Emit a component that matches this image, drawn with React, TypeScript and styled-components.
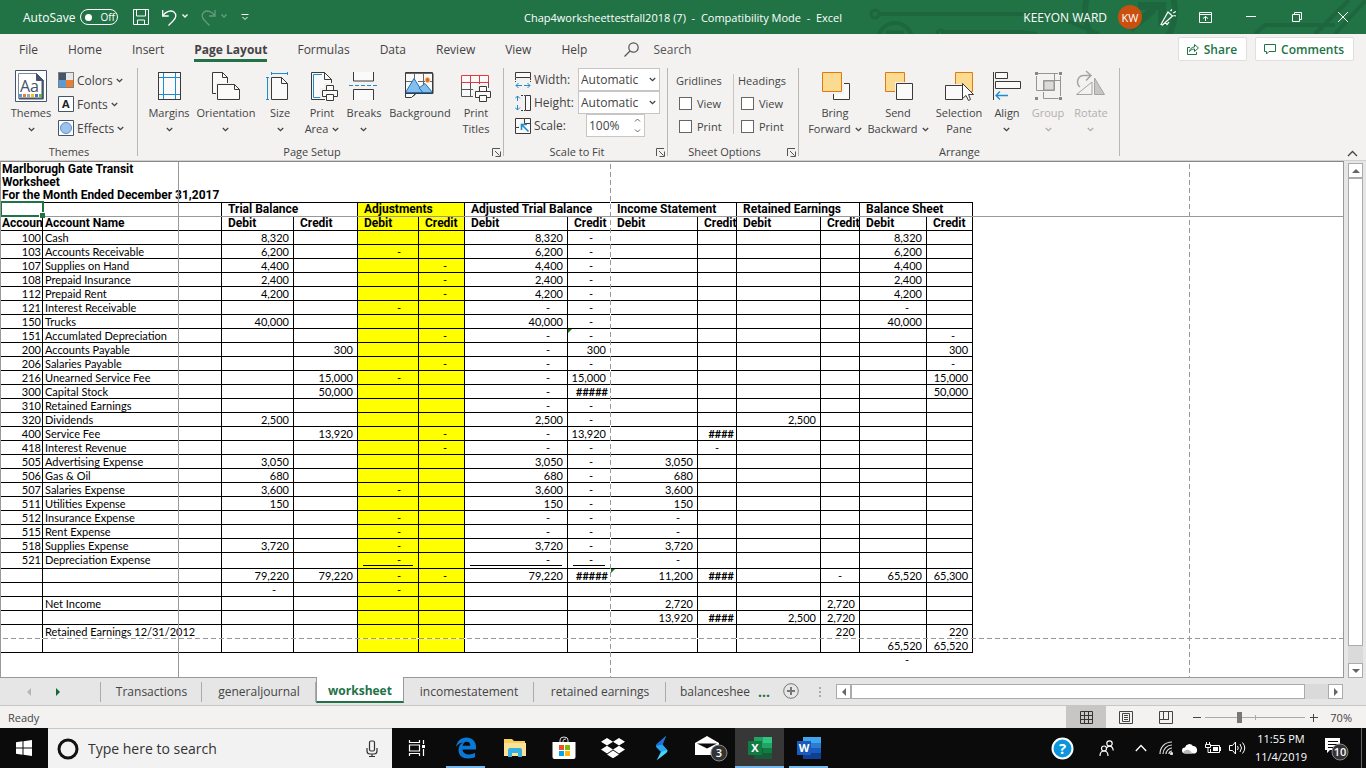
import React from "react";
import styled, { createGlobalStyle, css } from "styled-components";

const GlobalStyle = createGlobalStyle`
  * { box-sizing: border-box; }
  body { margin: 0; background: #e6e6e6; }
  body, button, input, select { font-family: "Open Sans", "Noto Sans", sans-serif; }
  button { border: 0; padding: 0; margin: 0; background: none; color: inherit; font-size: inherit; }
  svg { display: block; flex: none; }
`;

const Screen = styled.div`
  display: flex;
  flex-direction: column;
  height: 100vh;
  overflow: hidden;
  color: #444;
  font-size: 12px;
`;

/* ---------- title bar ---------- */

const TitleBar = styled.header`
  position: relative;
  display: grid;
  grid-template-columns: 1fr auto 1fr;
  align-items: center;
  height: 34px;
  flex: none;
  background: #217346;
  color: #fff;
`;

const TitleArt = styled.svg`
  position: absolute;
  right: 0;
  top: 0;
`;

const QuickAccess = styled.div`
  display: flex;
  align-items: center;
  padding-left: 23px;
`;

const AutoSave = styled.label`
  display: flex;
  align-items: center;
  gap: 5px;
  margin-right: 14px;
`;

const Toggle = styled.button`
  display: flex;
  align-items: center;
  gap: 8px;
  width: 38px;
  height: 16px;
  padding-left: 4px;
  border: 1px solid #fff;
  border-radius: 8px;
  font-size: 10px;
  line-height: 14px;
  &::before {
    content: "";
    width: 7px;
    height: 7px;
    border-radius: 50%;
    background: #fff;
  }
`;

const BarButton = styled.button<{ $w: number; $dim?: boolean; $short?: boolean }>`
  display: flex;
  align-items: center;
  justify-content: center;
  width: ${(p) => p.$w}px;
  height: ${(p) => (p.$short ? 26 : 34)}px;
  opacity: ${(p) => (p.$dim ? 0.3 : 1)};
`;

const DocTitle = styled.h1`
  margin: 0;
  font-size: 11px;
  font-weight: 400;
  white-space: pre;
`;

const WindowTools = styled.div`
  position: relative;
  display: flex;
  align-items: center;
  justify-content: flex-end;
`;

const Avatar = styled.span`
  display: flex;
  align-items: center;
  justify-content: center;
  width: 24px;
  height: 24px;
  margin: 0 12px 0 11px;
  border-radius: 50%;
  background: #ca5010;
  font-size: 11px;
`;

/* ---------- ribbon tabs ---------- */

const TabBar = styled.nav`
  display: flex;
  align-items: center;
  height: 34px;
  flex: none;
  padding: 0 12px 4px 4px;
  background: #f3f2f1;
`;

const RibbonTab = styled.button<{ $active?: boolean }>`
  position: relative;
  height: 30px;
  padding: 0 15px;
  font-size: 12px;
  white-space: nowrap;
  ${(p) =>
    p.$active &&
    css`
      font-weight: 700;
      &::after {
        content: "";
        position: absolute;
        left: 15px;
        right: 15px;
        bottom: 2px;
        height: 3px;
        background: #217346;
      }
    `}
`;

const SearchBox = styled.label`
  display: flex;
  align-items: center;
  gap: 14px;
  margin: 0 auto 0 22px;
`;

const SearchInput = styled.input`
  width: 90px;
  border: 0;
  padding: 0;
  background: none;
  font-size: 12px;
  outline: none;
  &::placeholder { color: #555; opacity: 1; }
`;

const ActionButton = styled.button`
  display: flex;
  align-items: center;
  gap: 5px;
  height: 24px;
  margin-left: 8px;
  padding: 0 9px 0 8px;
  border: 1px solid #e1dfdd;
  border-radius: 2px;
  background: #fff;
  color: #217346;
  font-size: 12px;
  font-weight: 600;
`;

/* ---------- ribbon ---------- */

const Ribbon = styled.section`
  display: flex;
  height: 93px;
  flex: none;
  background: #f3f2f1;
  border-bottom: 1px solid #d2d0ce;
`;

const Group = styled.div<{ $w: number }>`
  position: relative;
  display: flex;
  flex-direction: column;
  width: ${(p) => p.$w}px;
  flex: none;
  &::after {
    content: "";
    position: absolute;
    right: 0;
    top: 0;
    width: 1px;
    height: 88px;
    background: #b9b7b5;
  }
`;

const GroupBody = styled.div<{ $pad?: number }>`
  display: flex;
  height: 76px;
  padding-left: ${(p) => p.$pad ?? 0}px;
`;

const GroupFoot = styled.div<{ $launcher?: boolean }>`
  position: relative;
  height: 16px;
  padding-right: ${(p) => (p.$launcher ? 18 : 0)}px;
  line-height: 16px;
  font-size: 11px;
  text-align: center;
`;

const Launcher = styled.button`
  position: absolute;
  right: 3px;
  top: 4px;
`;

const BigButton = styled.button<{ $w: number; $dim?: boolean }>`
  display: flex;
  flex-direction: column;
  align-items: center;
  width: ${(p) => p.$w}px;
  padding-top: 2px;
  font-size: 11px;
  line-height: 16px;
  white-space: nowrap;
  color: ${(p) => (p.$dim ? "#b1afad" : "#444")};
`;

const BigLabel = styled.span`
  display: flex;
  flex-direction: column;
  align-items: center;
  margin-top: 3px;
`;

const LabelLine = styled.span`
  display: flex;
  align-items: center;
  justify-content: center;
  gap: 4px;
  height: 16px;
`;

const SmallList = styled.div`
  display: flex;
  flex-direction: column;
`;

const SmallButton = styled.button`
  display: flex;
  align-items: center;
  gap: 3px;
  height: 24px;
  font-size: 12px;
`;

const ScaleList = styled.div`
  display: grid;
  grid-template-columns: 19px 44px 82px;
  grid-auto-rows: 23px;
  align-items: center;
`;

const FieldLabel = styled.label`
  font-size: 12px;
  white-space: nowrap;
`;

const Field = styled.span<{ $inset?: boolean }>`
  display: flex;
  align-items: center;
  width: ${(p) => (p.$inset ? 59 : 82)}px;
  height: 23px;
  margin-left: ${(p) => (p.$inset ? 8 : 0)}px;
  padding: 0 3px 0 2px;
  border: 1px solid #c8c6c4;
  background: #fff;
`;

const Select = styled.select`
  flex: 1;
  min-width: 0;
  border: 0;
  padding: 0;
  appearance: none;
  background: none;
  color: #444;
  font-size: 12px;
`;

const Spin = styled.input`
  flex: 1;
  min-width: 0;
  border: 0;
  padding: 0;
  background: none;
  color: #444;
  font-size: 12px;
`;

const OptionColumn = styled.fieldset<{ $rule?: boolean }>`
  display: flex;
  flex-direction: column;
  width: ${(p) => (p.$rule ? 62 : 64)}px;
  height: 60px;
  margin: 6px 0 0;
  padding: 0 0 0 4px;
  border: 0;
  border-right: ${(p) => (p.$rule ? "1px solid #c8c6c4" : "0")};
`;

const OptionTitle = styled.span`
  flex: none;
  height: 18px;
  line-height: 14px;
  font-size: 11px;
`;

const Check = styled.label`
  display: flex;
  align-items: center;
  flex: none;
  gap: 5px;
  height: 23px;
  padding-left: 3px;
  font-size: 11px;
`;

const CheckInput = styled.input`
  width: 13px;
  height: 13px;
  margin: 0;
  appearance: none;
  border: 1px solid #666;
  background: #fff;
`;

const CollapseButton = styled.button`
  margin: auto 8px 3px auto;
`;

/* ---------- worksheet ---------- */

const Workspace = styled.main`
  display: flex;
  flex: 1;
  min-height: 0;
  background: #e6e6e6;
`;

const Pane = styled.div`
  position: relative;
  flex: 1;
  min-width: 0;
  overflow: hidden;
  border: 1px solid #999;
  border-top-color: #8a8886;
  background: #fff;
`;

const Sheet = styled.table`
  width: 972px;
  table-layout: fixed;
  border-collapse: separate;
  border-spacing: 0;
  color: #000;
  font-family: Lato, "Liberation Sans", Arial, sans-serif;
  font-size: 11px;
`;

const Column = styled.col<{ $w: number }>`
  width: ${(p) => p.$w}px;
`;

type CellKind = "id" | "text" | "head" | "headId" | "headText" | "num" | "dash" | "hash" | "lined";

const headFont = css`
  font-family: Roboto, "Liberation Sans", Arial, sans-serif;
  font-size: 12px;
  font-weight: 700;
  text-align: left;
`;

const kindStyles = {
  id: css`text-align: right; padding-right: 1px;`,
  text: css`padding-left: 2px; overflow: visible;`,
  head: css`${headFont} padding-left: 6px;`,
  headId: css`${headFont} padding-left: 1px;`,
  headText: css`${headFont} padding-left: 2px;`,
  num: css`text-align: right; padding-right: 4px;`,
  dash: css`text-align: right; padding-right: 17px;`,
  hash: css`text-align: right; padding-right: 2px; font-weight: 700;`,
  lined: css`text-align: right;`,
};

const Cell = styled.td<{
  $kind: CellKind;
  $fill?: boolean;
  $right?: boolean;
  $bottom?: boolean;
  $flag?: boolean;
  $tall?: boolean;
}>`
  position: relative;
  height: ${(p) => (p.$tall ? 16 : 14)}px;
  padding: 0;
  overflow: hidden;
  vertical-align: top;
  white-space: nowrap;
  line-height: 13px;
  background: ${(p) => (p.$fill ? "#ffff00" : "transparent")};
  border-right: ${(p) => (p.$right ? "1px solid #000" : "1px solid transparent")};
  border-bottom: ${(p) => (p.$bottom ? "1px solid #000" : "0")};
  background-clip: padding-box;
  ${(p) => kindStyles[p.$kind]}
  ${(p) =>
    p.$flag &&
    css`
      &::before {
        content: "";
        position: absolute;
        left: 0;
        top: 0;
        border-top: 4px solid #107c10;
        border-right: 4px solid transparent;
      }
    `}
`;

const TitleCell = styled.td<{ $first?: boolean; $last?: boolean }>`
  height: ${(p) => (p.$first ? 13 : 14)}px;
  padding: 0 0 0 1px;
  ${headFont}
  line-height: ${(p) => (p.$first ? 12 : 13)}px;
  border-bottom: ${(p) => (p.$last ? "1px solid #000" : "0")};
`;

const Underlined = styled.span`
  display: block;
  height: 13px;
  margin: 0 5px;
  padding-right: 12px;
  border-bottom: 1px solid #000;
`;

const FreezeRow = styled.i`
  position: absolute;
  left: 0;
  right: 0;
  top: 54px;
  height: 1px;
  background: #999;
`;

const FreezeColumn = styled.i`
  position: absolute;
  left: 177px;
  top: 0;
  bottom: 0;
  width: 1px;
  background: #999;
`;

const PageBreakColumn = styled.i<{ $x: number }>`
  position: absolute;
  left: ${(p) => p.$x}px;
  top: 0;
  bottom: 0;
  width: 1px;
  background: repeating-linear-gradient(to bottom, #fff 0 2px, #999 2px 7px, #fff 7px 8px);
`;

const PageBreakRow = styled.i`
  position: absolute;
  left: 0;
  right: 0;
  top: 476px;
  height: 1px;
  background: repeating-linear-gradient(to right, #fff 0 2px, #999 2px 7px, #fff 7px 8px);
`;

const Selection = styled.i`
  position: absolute;
  left: 0;
  top: 39px;
  width: 43px;
  height: 16px;
  border: 2px solid #217346;
  border-left-width: 1px;
  &::after {
    content: "";
    position: absolute;
    right: -3px;
    bottom: -3px;
    width: 5px;
    height: 5px;
    background: #217346;
    border: 1px solid #fff;
    border-right: 0;
    border-bottom: 0;
  }
`;

const VScroll = styled.div`
  display: flex;
  flex-direction: column;
  width: 22px;
  flex: none;
  padding: 2px 3px 0 4px;
`;

const VTrack = styled.div`
  flex: 1;
  display: flex;
  background: #dadada;
  padding-bottom: 17px;
`;

const Thumb = styled.div`
  flex: 1;
  border: 1px solid #ababab;
  background: #fff;
`;

const ScrollButton = styled.button`
  display: flex;
  align-items: center;
  justify-content: center;
  width: 15px;
  height: 15px;
  flex: none;
  border: 1px solid #ababab;
  background: #fff;
`;

/* ---------- sheet tabs ---------- */

const SheetBar = styled.nav`
  display: flex;
  height: 28px;
  flex: none;
  background: #e6e6e6;
  border-bottom: 1px solid #c6c6c6;
`;

const SheetNav = styled.div`
  display: flex;
  align-items: center;
  gap: 21px;
  width: 101px;
  flex: none;
  padding-left: 25px;
`;

const SheetTab = styled.button<{ $w: number; $active?: boolean; $cut?: boolean }>`
  position: relative;
  width: ${(p) => p.$w}px;
  height: 27px;
  flex: none;
  overflow: hidden;
  white-space: nowrap;
  font-size: 12px;
  text-align: ${(p) => (p.$cut ? "right" : "center")};
  &::after {
    content: "";
    position: absolute;
    right: 0;
    top: 4px;
    width: ${(p) => (p.$cut ? 0 : 1)}px;
    height: 20px;
    background: #ababab;
  }
  ${(p) =>
    p.$active &&
    css`
      height: 26px;
      margin-top: -1px;
      padding-top: 3px;
      background: #fff;
      color: #217346;
      font-weight: 700;
      border-left: 1px solid #999;
      border-right: 1px solid #999;
      border-bottom: 2px solid #217346;
      &::after { display: none; }
    `}
`;

const NavMark = styled.span`
  display: flex;
  align-items: center;
  width: 8px;
  border-right: 0;
`;

const NavRule = styled.i`
  width: 1px;
  height: 20px;
  margin-left: auto;
  background: #ababab;
`;

const More = styled.button`
  width: 28px;
  color: #217346;
  font-size: 14px;
  font-weight: 700;
`;

const HScroll = styled.div`
  display: flex;
  align-items: center;
  width: 507px;
  margin: 0 23px 0 auto;
`;

const Grip = styled.i`
  width: 2px;
  height: 10px;
  margin: 9px 0 0 15px;
  background: repeating-linear-gradient(#aaa 0 2px, transparent 2px 4px);
`;

const HTrack = styled.div`
  flex: 1;
  display: flex;
  height: 15px;
  padding-right: 23px;
  background: #dadada;
`;

/* ---------- status bar ---------- */

const StatusBar = styled.footer`
  display: flex;
  align-items: center;
  height: 22px;
  flex: none;
  padding: 0 14px 0 8px;
  background: #f3f2f1;
  font-size: 11px;
`;

const StatusText = styled.span`
  margin-right: auto;
`;

const ViewButton = styled.button<{ $active?: boolean }>`
  display: flex;
  align-items: center;
  justify-content: center;
  width: 40px;
  height: 22px;
  background: ${(p) => (p.$active ? "#c8c6c4" : "transparent")};
`;

const Zoom = styled.div`
  display: flex;
  align-items: center;
  gap: 4px;
  margin-left: 6px;
`;

const ZoomSlider = styled.input`
  width: 100px;
  height: 12px;
  margin: 0;
  appearance: none;
  background: linear-gradient(#aaa, #aaa) center / 1px 5px no-repeat,
    linear-gradient(#aaa, #aaa) center / 100% 1px no-repeat;
  &::-webkit-slider-thumb {
    appearance: none;
    width: 5px;
    height: 11px;
    background: #777;
  }
`;

const ZoomValue = styled.span`
  width: 30px;
  text-align: right;
`;

/* ---------- taskbar ---------- */

const Taskbar = styled.nav`
  display: flex;
  height: 40px;
  flex: none;
  background: #0b0b0b;
  color: #fff;
`;

const StartButton = styled.button`
  display: flex;
  align-items: center;
  justify-content: center;
  width: 48px;
`;

const TaskSearch = styled.label`
  display: flex;
  align-items: center;
  width: 344px;
  padding: 0 13px 0 9px;
  border-top: 1px solid #c8c8c8;
  background: #f2f2f2;
`;

const TaskSearchInput = styled.input`
  flex: 1;
  min-width: 0;
  margin-left: 9px;
  border: 0;
  padding: 0;
  background: none;
  font-size: 14px;
  outline: none;
  &::placeholder { color: #333; opacity: 1; }
`;

const TaskButton = styled.button<{ $open?: boolean; $active?: boolean }>`
  position: relative;
  display: flex;
  align-items: center;
  justify-content: center;
  width: 49px;
  background: ${(p) => (p.$active ? "#373737" : "none")};
  &::after {
    content: "";
    position: absolute;
    left: ${(p) => (p.$active ? 0 : 5)}px;
    right: ${(p) => (p.$active ? 0 : 5)}px;
    bottom: 0;
    height: 2px;
    background: ${(p) => (p.$open ? "#76b9ed" : "transparent")};
  }
`;

const Tray = styled.div`
  display: flex;
  align-items: center;
  margin-left: auto;
`;

const TrayButton = styled.button<{ $w: number }>`
  display: flex;
  align-items: center;
  justify-content: center;
  width: ${(p) => p.$w}px;
  height: 40px;
`;

const Clock = styled.time`
  width: 64px;
  text-align: center;
  font-size: 11px;
  line-height: 18px;
  white-space: nowrap;
`;

const DesktopEdge = styled.button`
  width: 5px;
  height: 40px;
  border-left: 1px solid #666;
`;

/* ---------- icons ---------- */

const Chevron = () => (
  <svg width="7" height="5" viewBox="0 0 7 5" fill="none" stroke="currentColor" strokeWidth="1.3">
    <path d="M.8 1 3.5 3.7 6.2 1" />
  </svg>
);

const Arrow = ({ dir, color = "#666" }: { dir: "up" | "down" | "left" | "right"; color?: string }) => {
  const d = {
    up: "M0 6 4 2 8 6Z",
    down: "M0 2 4 6 8 2Z",
    left: "M6 0 2 4 6 8Z",
    right: "M2 0 6 4 2 8Z",
  }[dir];
  return (
    <svg width="8" height="8" viewBox="0 0 8 8">
      <path d={d} fill={color} />
    </svg>
  );
};

const Art = ({ size = 32, children }: { size?: number; children: React.ReactNode }) => (
  <svg width={size} height={size} viewBox={`0 0 ${size} ${size}`} fill="none" stroke="#3b3a39">
    {children}
  </svg>
);

const Printer = ({ x, y }: { x: number; y: number }) => (
  <g transform={`translate(${x} ${y})`} fill="#fafafa">
    <path d="M-1.5 3.5h4v-5h9v5h6v9h-5v4h-9v-4h-5z" stroke="#f3f2f1" fill="#f3f2f1" />
    <path d="M4.500 5.500v-5h7v5" />
    <path d="M.5 5.500h15v6H.5z" />
    <path d="M4.500 9.500h7v6h-7z" />
  </g>
);

const blue = "#1e8bcd";

const icons = {
  themes: (
    <Art>
      <path d="M.5.500h31v31H.5z" fill="#fff" stroke="#44546a" />
      <path d="M3.500 3.500h18l7 7v18h-25z" fill="#fff" stroke="#7a8aa5" />
      <path d="M21.500 3.500v7h7z" fill="#44546a" stroke="#44546a" />
      <path d="M27.500 10v18.500H4" stroke="#44546a" strokeWidth="2" />
      <text x="5" y="22" fontSize="16" fill="#44546a" stroke="none">Aa</text>
      <g stroke="none">
        <path d="M4 24h3v3H4z" fill="#5b9bd5" /><path d="M8 24h3v3H8z" fill="#ed7d31" />
        <path d="M12 24h3v3h-3z" fill="#a5a5a5" /><path d="M16 24h3v3h-3z" fill="#ffc000" />
        <path d="M20 24h3v3h-3z" fill="#4472c4" /><path d="M24 24h3v3h-3z" fill="#70ad47" />
      </g>
    </Art>
  ),
  colors: (
    <Art size={16}>
      <g stroke="none">
        <path d="M0 0h16v16H0z" fill="#7f7f7f" />
        <path d="M1 1h7v7H1z" fill="#44546a" /><path d="M8 1h7v7H8z" fill="#e7e6e6" />
        <path d="M1 8h7v7H1z" fill="#5b9bd5" /><path d="M8 8h7v7H8z" fill="#ed7d31" />
      </g>
    </Art>
  ),
  fonts: (
    <Art size={16}>
      <path d="M.5.500h15v15H.5z" fill="#fff" stroke="#44546a" />
      <text x="4" y="12" fontSize="11" fontWeight="700" fill="#222" stroke="none">A</text>
    </Art>
  ),
  effects: (
    <Art size={16}>
      <path d="M.5.500h15v15H.5z" fill="#fff" stroke="#44546a" />
      <circle cx="8" cy="8" r="5.500" fill="#9dc3ea" stroke="#5b8fd0" />
    </Art>
  ),
  margins: (
    <Art>
      <path d="M5.500 2.500h22v27h-22z" fill="#fafafa" />
      <path d="M10.500 3v26M22.500 3v26M6 7.500h21M6 24.500h21" stroke={blue} />
      <path d="M5.500 2.500h22v27h-22z" />
    </Art>
  ),
  orientation: (
    <Art>
      <path d="M2.500 2.500h10l5 5v16h-15z" fill="#fafafa" /><path d="M12.500 2.500v5h5" />
      <path d="M6 13h20v18H6z" fill="#f3f2f1" stroke="none" />
      <path d="M7.500 14.500h17l5 5v10h-22z" fill="#fafafa" /><path d="M24.500 14.500v5h5" />
    </Art>
  ),
  size: (
    <Art>
      <path d="M7.500 7.500h10l6 6v16h-16z" fill="#fafafa" /><path d="M17.500 7.500v6h6" />
      <path d="M7 3.500h17M7.500 2v3M23.500 2v3M3.500 7v23M2 7.500h3M2 29.500h3" stroke={blue} />
    </Art>
  ),
  printArea: (
    <Art>
      <path d="M5.500 2.500h13l7 7v20h-20z" fill="#fafafa" /><path d="M18.500 2.500v7h7" />
      <path d="M16 4.500H7.500v23H15" stroke={blue} />
      <Printer x={16} y={15} />
    </Art>
  ),
  breaks: (
    <Art>
      <path d="M5.500 2v9h20V2M5.500 30V19.500h20V30" fill="#fafafa" />
      <path d="M1 15.500h30" stroke={blue} strokeDasharray="4 2" />
    </Art>
  ),
  background: (
    <Art>
      <path d="M2 3.500h27v20H12l-3 3H1.500" fill="#fafafa" />
      <path d="M1.500 3.500h27v20h-27zM10.500 4v6M19.500 4v12M2 11.500h6M14 11.500h14" stroke="#666" />
      <circle cx="23.500" cy="10" r="2.500" fill="#e36c0a" stroke="#f8c9a0" />
      <path d="M1.500 22.500 10 8.500l9 14z" fill="#83beec" stroke="#1e6fb8" />
      <path d="M15 18l6-4.500 7.500 9H19z" fill="#83beec" stroke="#1e6fb8" />
      <path d="M1.500 23.500v4h6l4-4z" fill="#fafafa" /><path d="M1.500 2.500h27v21h-27z" />
    </Art>
  ),
  printTitles: (
    <Art>
      <path d="M1.500 5.500h27v21h-27z" fill="#fafafa" stroke="none" />
      <path d="M1.500 12v14.500H14M1.500 19.500H17M10.500 12v14M19.500 12v6M28.500 12v6" stroke="#555" />
      <path d="M1.500 5.500h27v7h-27zM10.500 6v6M19.500 6v6" stroke="#e8373e" />
      <Printer x={15} y={16} />
    </Art>
  ),
  fitWidth: (
    <Art size={16}>
      <path d="M.5.500h15v5H.5z" fill="#fafafa" /><path d="M.5 6v4M15.500 6v4" strokeDasharray="2 1" />
      <path d="M1 13.500h6M9 13.500h6M3.500 11 1 13.500 3.500 16M12.500 11l2.500 2.500-2.500 2.500" stroke={blue} />
    </Art>
  ),
  fitHeight: (
    <Art size={16}>
      <path d="M10.500.500h5v15h-5z" fill="#fafafa" /><path d="M6 .5h4M6 15.500h4" strokeDasharray="2 1" />
      <path d="M2.500 1v5M2.500 10v5M0 3.500 2.500 1 5 3.500M0 12.500 2.500 15 5 12.500" stroke={blue} />
    </Art>
  ),
  scale: (
    <Art size={16}>
      <path d="M9.500 5.500h6M9.500 5.500V.5H.5v9H4M9.500.500h6v15H.5v-6" fill="#fafafa" />
      <path d="M13.500 13.500 7 7M6.500 12V6.500H12" stroke={blue} strokeWidth="1.600" />
    </Art>
  ),
  bringForward: (
    <Art>
      <path d="M14.500 13.500h16v16h-16z" fill="#fafafa" />
      <path d="M2 1h23v23H2z" fill="#f3f2f1" stroke="none" />
      <path d="M3.500 2.500h19v19h-19z" fill="#fadb8f" stroke="#e07a10" />
    </Art>
  ),
  sendBackward: (
    <Art>
      <path d="M3.500 2.500h19v19h-19z" fill="#fadb8f" stroke="#e07a10" />
      <path d="M13 12h19v19H13z" fill="#f3f2f1" stroke="none" />
      <path d="M14.500 13.500h16v16h-16z" fill="#fafafa" />
    </Art>
  ),
  selectionPane: (
    <Art>
      <path d="M12.500 2.500h17v19h-17z" fill="#fadb8f" stroke="#e07a10" />
      <path d="M1 14h20v18H1z" fill="#f3f2f1" stroke="none" />
      <path d="M2.500 15.500h17v14h-17z" fill="#fafafa" />
      <path d="M19.500 13.500v15l3.500-3 2.500 5 2-1-2-5h5z" fill="#fff" />
    </Art>
  ),
  align: (
    <Art>
      <path d="M2.500 2v28" /><path d="M4.500 2.500h12v6h-12zM4.500 11.500h25v7h-25z" fill="#fafafa" />
      <path d="M5 25.500h12M9 21.500l-4 4 4 4" stroke={blue} strokeWidth="1.300" />
    </Art>
  ),
  group: (
    <Art>
      <g stroke="#979593">
        <path d="M4.500 6v14.500h18V4M6 3.500h20M28.500 6v20M11.500 22v6.500h15M11.500 20V10.500h17" />
        <path d="M12 11h10v9H12z" fill="#dcdad8" />
      </g>
      <path d="M3 2h3v3H3zM27 2h3v3h-3zM3 27h3v3H3zM27 27h3v3h-3z" fill="#8a8886" stroke="none" />
    </Art>
  ),
  rotate: (
    <Art>
      <g stroke="#a6a4a2">
        <path d="M1.500 24.500 17 12v12.500z" fill="#f3f2f1" /><path d="M19.500 8v16.500h10z" fill="#c8c6c4" />
        <path d="M5 17A6.500 6.500 0 0 1 8 5.500h8M11 1l5 4.500-5 5" strokeWidth="1.500" />
      </g>
    </Art>
  ),
};

const LauncherIcon = () => (
  <svg width="9" height="9" viewBox="0 0 9 9" fill="none" stroke="#555">
    <path d="M.5 8V.5H8M3 3l4.500 4.500M8.500 3.500v5h-5" />
  </svg>
);

/* ---------- data ---------- */

const columnWidths = [42, 136, 43, 72, 64, 61, 46, 103, 43, 87, 39, 84, 39, 67, 46];
const columns = "ABCDEFGHIJKLMNO".split("");

type Row = Record<string, string>;

const rows: Row[] = [
  { A: "100", B: "Cash", D: "8,320", H: "8,320", I: "-", N: "8,320" },
  { A: "103", B: "Accounts Receivable", D: "6,200", F: "-", H: "6,200", I: "-", N: "6,200" },
  { A: "107", B: "Supplies on Hand", D: "4,400", G: "-", H: "4,400", I: "-", N: "4,400" },
  { A: "108", B: "Prepaid Insurance", D: "2,400", G: "-", H: "2,400", I: "-", N: "2,400" },
  { A: "112", B: "Prepaid Rent", D: "4,200", G: "-", H: "4,200", I: "-", N: "4,200" },
  { A: "121", B: "Interest Receivable", F: "-", H: "-", I: "-", N: "-" },
  { A: "150", B: "Trucks", D: "40,000", H: "40,000", I: "-", N: "40,000" },
  { A: "151", B: "Accumlated Depreciation", G: "-", H: "-", I: "-", O: "-", flag: "I" },
  { A: "200", B: "Accounts Payable", E: "300", H: "-", I: "300", O: "300" },
  { A: "206", B: "Salaries Payable", G: "-", H: "-", I: "-", O: "-" },
  { A: "216", B: "Unearned Service Fee", E: "15,000", F: "-", H: "-", I: "15,000", O: "15,000" },
  { A: "300", B: "Capital Stock", E: "50,000", H: "-", I: "#####", O: "50,000" },
  { A: "310", B: "Retained Earnings", H: "-", I: "-" },
  { A: "320", B: "Dividends", D: "2,500", H: "2,500", I: "-", L: "2,500" },
  { A: "400", B: "Service Fee", E: "13,920", G: "-", H: "-", I: "13,920", K: "####" },
  { A: "418", B: "Interest Revenue", G: "-", H: "-", I: "-", K: "-" },
  { A: "505", B: "Advertising Expense", D: "3,050", H: "3,050", I: "-", J: "3,050" },
  { A: "506", B: "Gas & Oil", D: "680", H: "680", I: "-", J: "680" },
  { A: "507", B: "Salaries Expense", D: "3,600", F: "-", H: "3,600", I: "-", J: "3,600" },
  { A: "511", B: "Utilities Expense", D: "150", H: "150", I: "-", J: "150" },
  { A: "512", B: "Insurance Expense", F: "-", H: "-", I: "-", J: "-" },
  { A: "515", B: "Rent Expense", F: "-", H: "-", I: "-", J: "-" },
  { A: "518", B: "Supplies Expense", D: "3,720", F: "-", H: "3,720", I: "-", J: "3,720" },
  { A: "521", B: "Depreciation Expense", F: "-", H: "-", I: "-", J: "-", underline: "FHI" },
  { D: "79,220", E: "79,220", F: "-", G: "-", H: "79,220", I: "#####", J: "11,200", K: "####", M: "-", N: "65,520", O: "65,300", flag: "J" },
  { D: "-", F: "-" },
  { B: "Net Income", J: "2,720", M: "2,720" },
  { J: "13,920", K: "####", L: "2,500", M: "2,720" },
  { B: "Retained Earnings 12/31/2012", M: "220", O: "220" },
  { N: "65,520", O: "65,520" },
  { N: "-", open: "yes" },
];

const sections = ["Trial Balance", "Adjustments", "Adjusted Trial Balance", "Income Statement", "Retained Earnings", "Balance Sheet"];

const headKinds: CellKind[] = ["headId", "headText"];

const headLabel = (i: number) => ["Account", "Account Name", ""][i] ?? (i % 2 ? "Debit" : "Credit");

const kindOf = (col: string, value: string): CellKind => {
  if (col === "A") return "id";
  if (col === "B") return "text";
  if (value === "-") return "dash";
  return value.startsWith("#") ? "hash" : "num";
};

const isYellow = (col: string) => col === "F" || col === "G";
const noRule = (col: string) => col === "B" || col === "I";

const Worksheet = () => (
  <Sheet>
    <colgroup>
      {columnWidths.map((w, i) => <Column key={i} $w={w} />)}
    </colgroup>
    <tbody>
      <tr><TitleCell colSpan={15} $first>Marlborugh Gate Transit</TitleCell></tr>
      <tr><TitleCell colSpan={15}>Worksheet</TitleCell></tr>
      <tr><TitleCell colSpan={15} $last>For the Month Ended December 31,2017</TitleCell></tr>
      <tr>
        <Cell $kind="head" $bottom />
        <Cell $kind="head" $bottom />
        <Cell $kind="head" $bottom $right />
        {sections.map((s) => (
          <Cell key={s} as="th" colSpan={2} $kind="head" $bottom $right={!s.startsWith("Adjusted")} $fill={s === "Adjustments"}>
            {s}
          </Cell>
        ))}
      </tr>
      <tr>
        {columns.map((c, i) => (
          <Cell key={c} as="th" $kind={headKinds[i] ?? "head"} $bottom $right={!noRule(c)} $fill={isYellow(c)}>
            {headLabel(i)}
          </Cell>
        ))}
      </tr>
      {rows.map((row, r) => (
        <tr key={r}>
          {columns.map((c) => {
            const value = row[c] ?? "";
            const lined = row.underline?.includes(c);
            return (
              <Cell
                key={c}
                $kind={lined ? "lined" : kindOf(c, value)}
                $fill={isYellow(c) && !row.open}
                $right={!noRule(c) && !row.open}
                $bottom={!row.open}
                $flag={row.flag === c}
                $tall={!!row.underline}
              >
                {lined ? <Underlined>{value}</Underlined> : value}
              </Cell>
            );
          })}
        </tr>
      ))}
    </tbody>
  </Sheet>
);

const ribbonTabs = ["File", "Home", "Insert", "Page Layout", "Formulas", "Data", "Review", "View", "Help"];

type Big = { w: number; icon: keyof typeof icons; lines: string[]; menu?: boolean; dim?: boolean };

const Large = ({ w, icon, lines, menu, dim }: Big) => (
  <BigButton $w={w} $dim={dim} disabled={dim}>
    {icons[icon]}
    <BigLabel>
      <LabelLine>{lines[0]}</LabelLine>
      <LabelLine>
        {lines[1]}
        {menu && <Chevron />}
      </LabelLine>
    </BigLabel>
  </BigButton>
);

const Foot = ({ children, launcher }: { children: React.ReactNode; launcher?: boolean }) => (
  <GroupFoot $launcher={launcher}>
    {children}
    {launcher && <Launcher aria-label={`${children} settings`}><LauncherIcon /></Launcher>}
  </GroupFoot>
);

const sheetTabs = [
  { name: "Transactions", w: 101 },
  { name: "generaljournal", w: 114 },
  { name: "worksheet", w: 88, active: true },
  { name: "incomestatement", w: 130 },
  { name: "retained earnings", w: 132 },
];

export default function App() {
  return (
    <Screen>
      <GlobalStyle />
      <TitleBar>
        <TitleArt width="506" height="34" viewBox="0 0 506 34" fill="none" stroke="#1e673e" strokeWidth="4">
          <circle cx="15" cy="14" r="4" strokeWidth="3" />
          <path d="M19 14h172l48 20M81 32h80l16 2" />
          <circle cx="81" cy="34" r="4" strokeWidth="3" />
          <circle cx="35" cy="40" r="17" />
          <path d="M26 33h18" strokeWidth="5" />
          <circle cx="270" cy="11" r="45" strokeWidth="6" />
          <path d="M270 29l24-20M278 6h24v20" strokeWidth="8" />
          <path d="M395 34l10-9h70M455 34l34-34M475 34l31-34" />
        </TitleArt>
        <QuickAccess>
          <AutoSave>
            AutoSave
            <Toggle role="switch" aria-checked="false">Off</Toggle>
          </AutoSave>
          <BarButton $w={18} aria-label="Save">
            <svg width="16" height="16" viewBox="0 0 16 16" fill="none" stroke="#fff">
              <path d="M.5.500h15v15H.5zM3.500 1v6h9V1M4.500 15v-4h7v4" />
            </svg>
          </BarButton>
          <BarButton $w={50} aria-label="Undo">
            <svg width="26" height="17" viewBox="0 0 26 17" fill="none" stroke="#fff" strokeWidth="1.300">
              <path d="M.7 1v6h6M1 6.500C4 2 9 1 12 3c3 2.500 2 6-1 9l-4.500 4.500M20.500 5.500 23 8l2.500-2.500" />
            </svg>
          </BarButton>
          <BarButton $w={28} $dim aria-label="Redo">
            <svg width="26" height="17" viewBox="0 0 26 17" fill="none" stroke="#fff" strokeWidth="1.300">
              <path d="M14 1v6H8M13.700 6.500C11 2 6 1 3 3 0 5.500 1 9 4 12l4.500 4.500M20.500 5.500 23 8l2.500-2.500" />
            </svg>
          </BarButton>
          <BarButton $w={34} aria-label="Customize Quick Access Toolbar">
            <svg width="8" height="7" viewBox="0 0 8 7" fill="none" stroke="#fff">
              <path d="M.5.500h7M1.500 3 4 5.500 6.500 3" />
            </svg>
          </BarButton>
        </QuickAccess>
        <DocTitle>{"Chap4worksheettestfall2018 (7)  -  Compatibility Mode  -  Excel"}</DocTitle>
        <WindowTools>
          KEEYON WARD
          <Avatar>KW</Avatar>
          <BarButton $w={28} aria-label="Coming soon">
            <svg width="17" height="17" viewBox="0 0 17 17" fill="none" stroke="#fff" strokeWidth="1.200">
              <path d="M1 15.500 8 3l4.500 4L2.500 16zM5 13l2 2.500 2-2.500M10.500 2 12 .5M13 4l3-1.500M13.500 6.500 16 7" />
            </svg>
          </BarButton>
          <BarButton $w={46} aria-label="Ribbon Display Options">
            <svg width="13" height="11" viewBox="0 0 13 11" fill="none" stroke="#fff">
              <path d="M.5.500h12v10H.5zM1 2.500h11M6.500 9V4.500M4 6.500l2.500-2 2.500 2" />
            </svg>
          </BarButton>
          <BarButton $w={46} aria-label="Minimize">
            <svg width="10" height="10" viewBox="0 0 10 10" stroke="#fff"><path d="M0 4.500h10" /></svg>
          </BarButton>
          <BarButton $w={46} aria-label="Restore">
            <svg width="10" height="10" viewBox="0 0 10 10" fill="none" stroke="#fff">
              <path d="M.5 2.500h7v7h-7zM2.500 2V.5h7v7H8" />
            </svg>
          </BarButton>
          <BarButton $w={46} aria-label="Close">
            <svg width="10" height="10" viewBox="0 0 10 10" stroke="#fff"><path d="M0 0l10 10M10 0 0 10" /></svg>
          </BarButton>
        </WindowTools>
      </TitleBar>

      <TabBar>
        {ribbonTabs.map((t) => (
          <RibbonTab key={t} $active={t === "Page Layout"}>{t}</RibbonTab>
        ))}
        <SearchBox>
          <svg width="15" height="15" viewBox="0 0 15 15" fill="none" stroke="#555" strokeWidth="1.200">
            <circle cx="9.500" cy="5.500" r="4.700" /><path d="M6 9 .5 14.500" />
          </svg>
          <SearchInput placeholder="Search" aria-label="Search" />
        </SearchBox>
        <ActionButton>
          <svg width="12" height="12" viewBox="0 0 12 12" fill="none" stroke="#217346">
            <path d="M3 4.500H.5v7h9V9M2.500 8.500C3 5.500 5 4 7.500 4V1.500l4 3.500-4 3.500V6C5.500 6 4 6.500 2.500 8.500z" />
          </svg>
          Share
        </ActionButton>
        <ActionButton>
          <svg width="12" height="12" viewBox="0 0 12 12" fill="none" stroke="#217346">
            <path d="M.5 1.500h11v7H5l-2.500 2.500V8.500h-2z" />
          </svg>
          Comments
        </ActionButton>
      </TabBar>

      <Ribbon>
        <Group $w={138}>
          <GroupBody $pad={4}>
            <Large w={54} icon="themes" lines={["Themes"]} menu />
            <SmallList>
              <SmallButton>{icons.colors}Colors<Chevron /></SmallButton>
              <SmallButton>{icons.fonts}Fonts<Chevron /></SmallButton>
              <SmallButton>{icons.effects}Effects<Chevron /></SmallButton>
            </SmallList>
          </GroupBody>
          <Foot>Themes</Foot>
        </Group>
        <Group $w={366}>
          <GroupBody $pad={5}>
            <Large w={52} icon="margins" lines={["Margins"]} menu />
            <Large w={62} icon="orientation" lines={["Orientation"]} menu />
            <Large w={46} icon="size" lines={["Size"]} menu />
            <Large w={38} icon="printArea" lines={["Print", "Area"]} menu />
            <Large w={46} icon="breaks" lines={["Breaks"]} menu />
            <Large w={66} icon="background" lines={["Background"]} />
            <Large w={46} icon="printTitles" lines={["Print", "Titles"]} />
          </GroupBody>
          <Foot launcher>Page Setup</Foot>
        </Group>
        <Group $w={164}>
          <GroupBody $pad={11}>
            <ScaleList>
              {icons.fitWidth}
              <FieldLabel htmlFor="fit-width">Width:</FieldLabel>
              <Field>
                <Select id="fit-width"><option>Automatic</option></Select>
                <Chevron />
              </Field>
              {icons.fitHeight}
              <FieldLabel htmlFor="fit-height">Height:</FieldLabel>
              <Field>
                <Select id="fit-height"><option>Automatic</option></Select>
                <Chevron />
              </Field>
              {icons.scale}
              <FieldLabel htmlFor="scale">Scale:</FieldLabel>
              <Field $inset>
                <Spin id="scale" defaultValue="100%" />
                <svg width="7" height="15" viewBox="0 0 7 15" fill="none" stroke="#666">
                  <path d="M1 3.500 3.500 1 6 3.500M1 11.500 3.500 14 6 11.500" />
                </svg>
              </Field>
            </ScaleList>
          </GroupBody>
          <Foot launcher>Scale to Fit</Foot>
        </Group>
        <Group $w={131}>
          <GroupBody $pad={4}>
            <OptionColumn $rule aria-label="Gridlines">
              <OptionTitle>Gridlines</OptionTitle>
              <Check><CheckInput type="checkbox" />View</Check>
              <Check><CheckInput type="checkbox" />Print</Check>
            </OptionColumn>
            <OptionColumn aria-label="Headings">
              <OptionTitle>Headings</OptionTitle>
              <Check><CheckInput type="checkbox" />View</Check>
              <Check><CheckInput type="checkbox" />Print</Check>
            </OptionColumn>
          </GroupBody>
          <Foot launcher>Sheet Options</Foot>
        </Group>
        <Group $w={321}>
          <GroupBody $pad={5}>
            <Large w={62} icon="bringForward" lines={["Bring", "Forward"]} menu />
            <Large w={64} icon="sendBackward" lines={["Send", "Backward"]} menu />
            <Large w={58} icon="selectionPane" lines={["Selection", "Pane"]} />
            <Large w={38} icon="align" lines={["Align"]} menu />
            <Large w={44} icon="group" lines={["Group"]} menu dim />
            <Large w={42} icon="rotate" lines={["Rotate"]} menu dim />
          </GroupBody>
          <Foot>Arrange</Foot>
        </Group>
        <CollapseButton aria-label="Collapse the Ribbon">
          <svg width="11" height="7" viewBox="0 0 11 7" fill="none" stroke="#444" strokeWidth="1.300">
            <path d="M1 6l4.500-4.500L10 6" />
          </svg>
        </CollapseButton>
      </Ribbon>

      <Workspace>
        <Pane>
          <Worksheet />
          <PageBreakColumn $x={609} />
          <PageBreakColumn $x={1188} />
          <PageBreakRow />
          <FreezeRow />
          <FreezeColumn />
          <Selection />
        </Pane>
        <VScroll>
          <ScrollButton aria-label="Scroll up"><Arrow dir="up" /></ScrollButton>
          <VTrack><Thumb /></VTrack>
          <ScrollButton aria-label="Scroll down"><Arrow dir="down" /></ScrollButton>
        </VScroll>
      </Workspace>

      <SheetBar>
        <SheetNav>
          <NavMark><Arrow dir="left" color="#b5b5b5" /></NavMark>
          <NavMark><Arrow dir="right" color="#0e6b37" /></NavMark>
          <NavRule />
        </SheetNav>
        {sheetTabs.map((t) => (
          <SheetTab key={t.name} $w={t.w} $active={t.active}>{t.name}</SheetTab>
        ))}
        <SheetTab $w={84} $cut>balanceshee</SheetTab>
        <More aria-label="More sheets">...</More>
        <BarButton $w={26} $short aria-label="New sheet">
          <svg width="16" height="16" viewBox="0 0 16 16" fill="none" stroke="#777">
            <circle cx="8" cy="8" r="7.300" /><path d="M8 4v8M4 8h8" strokeWidth="2" />
          </svg>
        </BarButton>
        <Grip />
        <HScroll>
          <ScrollButton aria-label="Scroll left"><Arrow dir="left" /></ScrollButton>
          <HTrack><Thumb /></HTrack>
          <ScrollButton aria-label="Scroll right"><Arrow dir="right" /></ScrollButton>
        </HScroll>
      </SheetBar>

      <StatusBar>
        <StatusText>Ready</StatusText>
        <ViewButton $active aria-label="Normal">
          <svg width="13" height="13" viewBox="0 0 13 13" fill="none" stroke="#333">
            <path d="M.5.500h12v12H.5zM4.500 1v11M8.500 1v11M1 4.500h11M1 8.500h11" />
          </svg>
        </ViewButton>
        <ViewButton aria-label="Page Layout view">
          <svg width="14" height="13" viewBox="0 0 14 13" fill="none" stroke="#444">
            <path d="M.5.500h13v12H.5zM3.500 2.500h7v8h-7zM5 4.500h4M5 6.500h4M5 8.500h4" />
          </svg>
        </ViewButton>
        <ViewButton aria-label="Page Break Preview">
          <svg width="14" height="13" viewBox="0 0 14 13" fill="none" stroke="#444">
            <path d="M.5.500h13v12H.5zM1 8.500h8M9.500 1v8M4.500 1v7" />
          </svg>
        </ViewButton>
        <Zoom>
          <svg width="9" height="9" viewBox="0 0 9 9" stroke="#444"><path d="M1 4.500h8" /></svg>
          <ZoomSlider type="range" min="0" max="100" defaultValue="34" aria-label="Zoom" />
          <svg width="9" height="9" viewBox="0 0 9 9" stroke="#444"><path d="M1 4.500h8M4.500 1v8" /></svg>
          <ZoomValue>70%</ZoomValue>
        </Zoom>
      </StatusBar>

      <Taskbar>
        <StartButton aria-label="Start">
          <svg width="16" height="16" viewBox="0 0 16 16" fill="#fff">
            <path d="M0 2.200 6.500 1.300v6.200H0zM7.500 1.200 16 0v7.500H7.500zM0 8.500h6.500v6.200L0 13.800zM7.500 8.500H16V16l-8.500-1.200z" />
          </svg>
        </StartButton>
        <TaskSearch>
          <svg width="22" height="22" viewBox="0 0 22 22" fill="none">
            <circle cx="11" cy="11" r="9" stroke="#111" strokeWidth="3" />
          </svg>
          <TaskSearchInput placeholder="Type here to search" aria-label="Type here to search" />
          <svg width="14" height="18" viewBox="0 0 14 18" fill="none" stroke="#333" strokeWidth="1.200">
            <rect x="4.500" y="1" width="5" height="10" rx="1.500" />
            <path d="M2 8v3c0 2 1 3 3 3h4c2 0 3-1 3-3V8M7 14v2.500M4 16.500h6" />
          </svg>
        </TaskSearch>
        <TaskButton aria-label="Task View">
          <svg width="18" height="16" viewBox="0 0 18 16" fill="none" stroke="#fff" strokeWidth="1.200">
            <path d="M1.500 0v2.500h10V0M1.500 5h10v6h-10zM1.500 16v-2.500h10V16M15.500 0v4M15.500 9v7" />
            <path d="M14 5h3v3h-3z" fill="#fff" stroke="none" />
          </svg>
        </TaskButton>
        <TaskButton $open aria-label="Edge">
          <svg width="22" height="22" viewBox="0 0 22 22">
            <path d="M1 10C2 4 6 .5 11.500.500 17 .5 21 4.500 21 10v2.500H7.500c.3 3.500 3.200 5 6.500 5 2.200 0 4.200-.6 6-1.700v4.300c-2 1-4.200 1.400-6.700 1.400C7 21.500 3.500 18 3.500 13c0-3.300 1.700-6 4.500-7.500C4.500 6 2.500 7.500 1 10zm6.700-1.300h7.600c0-2.500-1.300-4-3.700-4-2.300 0-3.600 1.700-3.900 4z" fill="#0a78d7" />
          </svg>
        </TaskButton>
        <TaskButton aria-label="File Explorer">
          <svg width="22" height="20" viewBox="0 0 22 20">
            <path d="M0 1h8l2 2h11v15H0z" fill="#f6cf5c" /><path d="M0 5h22v13H0z" fill="#fce294" />
            <path d="M4 19v-7q0-2 2-2h10q2 0 2 2v7h-4v-4H8v4z" fill="#33b0e4" />
          </svg>
        </TaskButton>
        <TaskButton aria-label="Store">
          <svg width="24" height="24" viewBox="0 0 24 24">
            <path d="M8 7V4q0-3 4-3t4 3v3M11 7V5q0-2 3-2" fill="none" stroke="#ddd" />
            <path d="M.5 6h23v15q0 2-2 2h-19q-2 0-2-2z" fill="#fff" />
            <path d="M7 9h5v5H7z" fill="#f25022" /><path d="M13 9h5v5h-5z" fill="#7fba00" />
            <path d="M7 15h5v5H7z" fill="#00a4ef" /><path d="M13 15h5v5h-5z" fill="#ffb900" />
          </svg>
        </TaskButton>
        <TaskButton aria-label="Dropbox">
          <svg width="24" height="21" viewBox="0 0 24 21" fill="#fff">
            <path d="M6 0l6 3.800-6 3.800L0 3.800zM18 0l6 3.800-6 3.800-6-3.800zM6 7.800l6 3.800-6 3.800-6-3.800zM18 7.800l6 3.800-6 3.800-6-3.800zM12 12.600l6 3.800-6 3.800-6-3.800z" />
          </svg>
        </TaskButton>
        <TaskButton aria-label="Smart app">
          <svg width="14" height="24" viewBox="0 0 14 24">
            <path d="M11 0 2 8q-2 2 0 4l4 4-4 8 9-7q2.500-2 .5-4L7.500 8.500z" fill="#28a5f2" />
            <path d="M11 0 2 8q-1 1-1 2l6.500-1.500z" fill="#1c6fd9" /><path d="M6 16l6.500-2q0 1.500-1.500 3l-9 7z" fill="#49d5f5" />
          </svg>
        </TaskButton>
        <TaskButton aria-label="Mail, 3 new">
          <svg width="34" height="28" viewBox="0 0 34 28">
            <path d="M1 9 13 2l12 7v12H1z" fill="#fff" />
            <path d="M3 9.500h20L13 14.500z" fill="#0b0b0b" />
            <circle cx="25" cy="19" r="8" fill="#333" stroke="#888" />
            <text x="25" y="23" textAnchor="middle" fontSize="11" fontWeight="600" fill="#fff">3</text>
          </svg>
        </TaskButton>
        <TaskButton $open $active aria-label="Excel">
          <svg width="24" height="22" viewBox="0 0 24 22">
            <path d="M6 0h9v11H6z" fill="#21a366" /><path d="M15 0h9v6h-9z" fill="#33c481" />
            <path d="M15 6h9v5h-9z" fill="#21a366" /><path d="M6 11h18v11H6z" fill="#185c37" />
            <path d="M15 11h9v5h-9z" fill="#107c41" /><path d="M0 4h14v14H0z" fill="#107c41" />
            <text x="7" y="15" textAnchor="middle" fontSize="11" fontWeight="700" fill="#fff">X</text>
          </svg>
        </TaskButton>
        <TaskButton $open aria-label="Word">
          <svg width="24" height="22" viewBox="0 0 24 22">
            <path d="M6 0h18v6H6z" fill="#41a5ee" /><path d="M6 6h18v5H6z" fill="#2b7cd3" />
            <path d="M6 11h18v6H6z" fill="#185abd" /><path d="M6 16h18v6H6z" fill="#103f91" />
            <path d="M0 4h14v14H0z" fill="#185abd" />
            <text x="7" y="15" textAnchor="middle" fontSize="11" fontWeight="700" fill="#fff">W</text>
          </svg>
        </TaskButton>
        <Tray>
          <TrayButton $w={44} aria-label="Help">
            <svg width="23" height="23" viewBox="0 0 23 23">
              <circle cx="11.500" cy="11.500" r="10" fill="#0b95dc" stroke="#fff" strokeWidth="2" />
              <text x="11.500" y="17" textAnchor="middle" fontSize="15" fontWeight="700" fill="#fff">?</text>
            </svg>
          </TrayButton>
          <TrayButton $w={44} aria-label="People">
            <svg width="15" height="17" viewBox="0 0 15 17" fill="none" stroke="#fff" strokeWidth="1.200">
              <circle cx="5" cy="8.500" r="2.500" /><circle cx="10.500" cy="3.500" r="2.700" />
              <path d="M1 16c0-3 1.500-5 4-5s4 2 4 5M8 7.500c1-1 2-1.300 2.500-1.300 2 0 3.500 2 3.700 4.300" />
            </svg>
          </TrayButton>
          <TrayButton $w={26} aria-label="Show hidden icons">
            <svg width="12" height="8" viewBox="0 0 12 8" fill="none" stroke="#fff" strokeWidth="1.300">
              <path d="M.8 7 6 1.500 11.200 7" />
            </svg>
          </TrayButton>
          <TrayButton $w={24} aria-label="Network">
            <svg width="14" height="14" viewBox="0 0 14 14" fill="none" stroke="#ddd" strokeWidth="1.200">
              <path d="M1 13C1 6 6 1 13 1M4 13c0-5 4-9 9-9M7 13c0-3 3-6 6-6M10 13c0-2 1-3 3-3" />
              <circle cx="12.500" cy="12.500" r="1" fill="#fff" />
            </svg>
          </TrayButton>
          <TrayButton $w={23} aria-label="OneDrive">
            <svg width="16" height="11" viewBox="0 0 16 11">
              <path d="M3 10.500a3 3 0 0 1 0-6A4.500 4.500 0 0 1 11 3a4 4 0 0 1 2 7.500z" fill="#fff" />
              <path d="M1 9.500C3 6 8 5 10 10.500H3z" fill="#bbb" />
            </svg>
          </TrayButton>
          <TrayButton $w={24} aria-label="Battery">
            <svg width="17" height="12" viewBox="0 0 17 12" fill="none" stroke="#fff">
              <path d="M6 3.500h8.500v7h-9V7M15.500 5v4M1.500 0v2M4.500 0v2M.5 2.500h5v3h-5zM3 6v4.500h3" />
              <path d="M8 5h5v4H8z" fill="#fff" stroke="none" />
            </svg>
          </TrayButton>
          <TrayButton $w={24} aria-label="Volume">
            <svg width="17" height="14" viewBox="0 0 17 14" fill="none" stroke="#fff">
              <path d="M.5 4.500h3l3-3.500v12l-3-3.500h-3zM8.500 5q1.500 2 0 4M11 3q3 4 0 8M13.500 1.500q4.500 5.500 0 11" />
            </svg>
          </TrayButton>
          <Clock>
            11:55 PM<br />11/4/2019
          </Clock>
          <TrayButton $w={48} aria-label="10 new notifications">
            <svg width="26" height="26" viewBox="0 0 26 26">
              <path d="M1 3h15v12H6l-3 3v-3H1z" fill="#fff" />
              <path d="M4 6.500h10M4 9.500h10M4 12.500h6" stroke="#0b0b0b" />
              <circle cx="16" cy="17" r="8" fill="#333" stroke="#888" />
              <text x="16" y="21" textAnchor="middle" fontSize="11" fontWeight="600" fill="#fff">10</text>
            </svg>
          </TrayButton>
          <DesktopEdge aria-label="Show desktop" />
        </Tray>
      </Taskbar>
    </Screen>
  );
}
